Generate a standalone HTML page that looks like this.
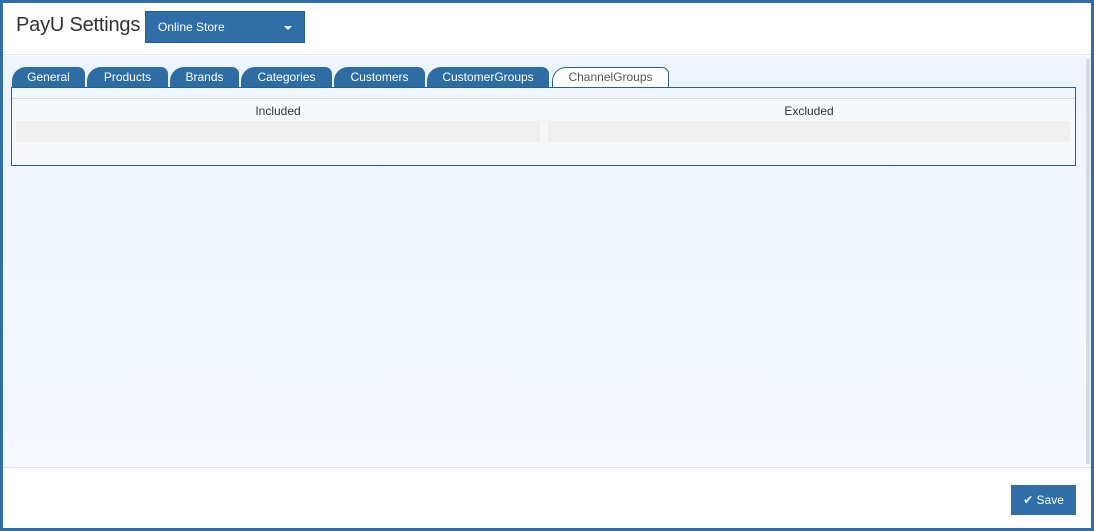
<!DOCTYPE html>
<html><head><meta charset="utf-8"><style>
*{margin:0;padding:0;box-sizing:border-box}
body{width:1094px;height:531px;overflow:hidden;font-family:"Segoe UI","Liberation Sans",sans-serif;background:#2f6ea8}
.frame{position:absolute;left:3px;top:3px;width:1088px;height:525px;background:#fff}
.hdr{position:absolute;left:0;top:0;width:1088px;height:52px;border-bottom:1px solid #dfe6ee;background:#fff}
.title{position:absolute;left:13px;top:11px;font-size:20px;color:#333;letter-spacing:-0.2px}
.dd{position:absolute;left:142px;top:8px;width:160px;height:32px;background:#2f6ea8;border:1px solid #255a8a;color:#fff;font-size:12px;padding:8px 0 0 12px}
.dd:after{content:"";position:absolute;right:12px;top:14px;border-left:4px solid transparent;border-right:4px solid transparent;border-top:4px solid #fff}
.body{position:absolute;left:0;top:53px;width:1088px;height:411px;background:linear-gradient(#edf4fb,#f5f9fd)}
.sb{position:absolute;right:1px;top:3px;width:4px;height:405px;background:#d6dbe0}
.tab{position:absolute;top:11px;height:20px;background:#2e6da4;color:#fff;font-size:12px;text-align:center;line-height:20px;border-radius:14px 7px 0 0}
.tab.act{background:#fff;color:#555;border:1px solid #2a5f8a;border-bottom:none;line-height:18px}
.panel{position:absolute;left:8px;top:31px;width:1065px;height:79px;border:1px solid #2a5f8a;background:#f0f6fc}
.inner{position:absolute;left:0;top:10px;width:1063px;height:67px;border-top:1px solid #d3dbe4;background:#f5f8fb}
.lbl{position:absolute;top:5px;font-size:12px;color:#333;text-align:center}
.bar{position:absolute;top:22px;height:21px;background:#efefef}
.ftr{position:absolute;left:0;top:464px;width:1088px;height:61px;border-top:1px solid #e3e3e3;background:#fff}
.save{position:absolute;left:1008px;top:17px;width:65px;height:30px;background:#2f6ea8;color:#fff;font-size:12px;line-height:30px;text-align:center}
</style></head><body>
<div class="frame">
<div class="hdr"><div class="title">PayU Settings</div><div class="dd">Online Store</div></div>
<div class="body">
<div class="tab" style="left:9px;width:73px">General</div>
<div class="tab" style="left:84px;width:81px">Products</div>
<div class="tab" style="left:167px;width:69px">Brands</div>
<div class="tab" style="left:238px;width:91px">Categories</div>
<div class="tab" style="left:331px;width:91px">Customers</div>
<div class="tab" style="left:424px;width:122px">CustomerGroups</div>
<div class="tab act" style="left:549px;width:117px">ChannelGroups</div>
<div class="panel"><div class="inner">
<div class="lbl" style="left:4px;width:524px">Included</div>
<div class="lbl" style="left:536px;width:522px">Excluded</div>
<div class="bar" style="left:4px;width:524px"></div>
<div class="bar" style="left:536px;width:522px"></div>
</div></div>
<div class="sb"></div>
</div>
<div class="ftr"><div class="save">✔ Save</div></div>
</div>
</body></html>
